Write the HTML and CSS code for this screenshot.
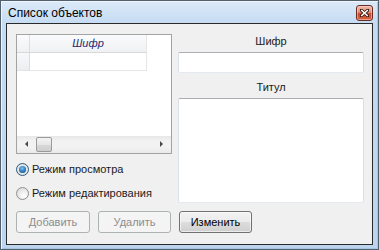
FILE: index.html
```html
<!DOCTYPE html>
<html lang="ru">
<head>
    <meta charset="UTF-8">
    <title>Список объектов</title>
    <link rel="stylesheet" href="styles.css">
</head>
<body>
    <div class="window">
        <div class="titlebar">
            <span class="title">Список объектов</span>
            <div class="close">
                <svg width="9" height="8" viewBox="0 0 9 8">
                    <path d="M1 1 L8 7 M8 1 L1 7" stroke="#3a1a14" stroke-width="3.2" stroke-linecap="square"/>
                    <path d="M1.2 1 L7.8 7 M7.8 1 L1.2 7" stroke="#ffffff" stroke-width="1.6"/>
                </svg>
            </div>
        </div>
        <div class="client">
            <div class="columns">
                <div class="left">
                    <div class="grid">
                        <div class="grid-body">
                            <div class="grid-row header">
                                <div class="row-head"></div>
                                <div class="cell">Шифр</div>
                            </div>
                            <div class="grid-row">
                                <div class="row-head"></div>
                                <div class="cell"></div>
                            </div>
                        </div>
                        <div class="hscroll">
                            <div class="arrow left-arrow"></div>
                            <div class="track">
                                <div class="thumb"></div>
                            </div>
                            <div class="arrow right-arrow"></div>
                        </div>
                    </div>
                    <label class="radio">
                        <span class="dot checked"></span>
                        <span>Режим просмотра</span>
                    </label>
                    <label class="radio second">
                        <span class="dot"></span>
                        <span>Режим редактирования</span>
                    </label>
                </div>
                <div class="right">
                    <div class="caption">Шифр</div>
                    <div class="textbox"></div>
                    <div class="caption second">Титул</div>
                    <div class="textbox area"></div>
                </div>
            </div>
            <div class="buttons">
                <div class="btn disabled wide">Добавить</div>
                <div class="btn disabled">Удалить</div>
                <div class="btn">Изменить</div>
            </div>
        </div>
    </div>
</body>
</html>
```

FILE: styles.css
```css
body {
    margin: 0;
    padding: 0;
    font-family: "Liberation Sans", Arial, sans-serif;
    font-size: 11px;
    color: #1a1a1a;
}
.window {
    width: 379px;
    height: 250px;
    box-sizing: border-box;
    border: 1px solid #52606e;
    padding: 0 5px 4px 5px;
    background: linear-gradient(to bottom, #dbeaf9 0px, #c6dcf3 22px, #bcd4ee 100%);
    box-shadow: inset 1px 1px 0 #eef5fc, inset -1px -1px 0 #a9c4e0;
}
.titlebar {
    height: 22px;
    display: flex;
    align-items: flex-start;
    justify-content: space-between;
}
.title {
    padding-left: 2px;
    margin-top: 5px;
    font-size: 12px;
    color: #000;
}
.close {
    width: 17px;
    height: 16px;
    margin-top: 4px;
    box-sizing: border-box;
    border: 1px solid #6b2c24;
    border-radius: 3px;
    background: linear-gradient(to bottom, #eeb9a9 0%, #dc8f78 45%, #c8472e 55%, #d6663f 100%);
    box-shadow: inset 0 0 0 1px rgba(255, 220, 210, 0.5);
    display: flex;
    align-items: center;
    justify-content: center;
}
.client {
    height: 222px;
    box-sizing: border-box;
    border: 1px solid #2a2a2a;
    background: #f0f0f0;
    padding: 10px 8px 0 9px;
}
.columns {
    display: flex;
    gap: 6px;
}
.left {
    width: 156px;
}
.grid {
    height: 120px;
    box-sizing: border-box;
    border: 1px solid #a3a3a3;
    background: #fff;
    display: flex;
    flex-direction: column;
}
.grid-body {
    flex: 1;
}
.grid-row {
    display: flex;
    height: 18px;
}
.row-head {
    width: 12px;
    border-right: 1px solid #dcdcdc;
    border-bottom: 1px solid #e4e4e4;
    background: linear-gradient(to bottom, #f7f8fa, #eceef1);
}
.cell {
    width: 116px;
    border-right: 1px solid #e6e6e6;
    border-bottom: 1px solid #e6e6e6;
    text-align: center;
    line-height: 17px;
}
.header .row-head,
.header .cell {
    border-bottom-color: #d8d8d8;
    background: linear-gradient(to bottom, #fbfbfc, #eff1f4);
}
.header .cell {
    font-style: italic;
    color: #1c2a72;
}
.hscroll {
    height: 17px;
    display: flex;
    align-items: center;
    background: linear-gradient(to bottom, #e7e7e7, #f2f2f2 30%, #f2f2f2 70%, #e9e9e9);
}
.arrow {
    width: 18px;
    height: 17px;
    position: relative;
}
.left-arrow::after,
.right-arrow::after {
    content: "";
    position: absolute;
    top: 5px;
    border-top: 3.5px solid transparent;
    border-bottom: 3.5px solid transparent;
}
.left-arrow::after {
    left: 8px;
    border-right: 3px solid #4a4a4a;
}
.right-arrow::after {
    left: 7px;
    border-left: 3px solid #4a4a4a;
}
.track {
    flex: 1;
    height: 17px;
    display: flex;
    align-items: center;
}
.thumb {
    width: 16px;
    height: 15px;
    margin-left: 1px;
    box-sizing: border-box;
    border: 1px solid #9a9a9a;
    border-radius: 2px;
    background: linear-gradient(to bottom, #f3f3f3, #e6e6e6 50%, #d8d8d8 51%, #cfcfcf);
}
.radio {
    display: flex;
    align-items: center;
    gap: 3px;
    height: 16px;
    margin-top: 7px;
}
.radio.second {
    margin-top: 8px;
}
.dot {
    width: 13px;
    height: 13px;
    box-sizing: border-box;
    border-radius: 50%;
    border: 1px solid #8e8f8f;
    background: radial-gradient(circle at 65% 70%, #ffffff 0%, #e6e6e6 60%, #d2d2d2 100%);
    position: relative;
}
.dot.checked {
    border-color: #2b5b80;
    background: radial-gradient(circle at 50% 50%, #f6f6f6, #d8d8d8);
}
.dot.checked::after {
    content: "";
    position: absolute;
    left: 2px;
    top: 2px;
    width: 7px;
    height: 7px;
    border-radius: 50%;
    background: radial-gradient(circle at 45% 35%, #7ec2f2 0%, #2f7fc0 50%, #0d3f6a 100%);
}
.right {
    width: 186px;
}
.caption {
    height: 14px;
    line-height: 14px;
    text-align: center;
    margin-bottom: 4px;
}
.caption.second {
    margin-top: 7px;
}
.textbox {
    height: 21px;
    box-sizing: border-box;
    background: #fff;
    border: 1px solid #dbdfe6;
    border-top-color: #abadb3;
    border-bottom-color: #e3e9ef;
    border-radius: 2px;
}
.textbox.area {
    height: 105px;
}
.buttons {
    display: flex;
    gap: 8px;
    margin-top: 8px;
}
.btn {
    width: 73px;
    height: 22px;
    box-sizing: border-box;
    border: 1px solid #707070;
    border-radius: 3px;
    background: linear-gradient(to bottom, #f2f2f2 0%, #ebebeb 50%, #dddddd 51%, #cfcfcf 100%);
    box-shadow: inset 0 0 0 1px rgba(255, 255, 255, 0.6);
    text-align: center;
    line-height: 20px;
    color: #000;
}
.btn.wide {
    width: 74px;
}
.btn.disabled {
    border-color: #adb2b5;
    background: #f4f4f4;
    box-shadow: none;
    color: #8d8d8d;
}
```
